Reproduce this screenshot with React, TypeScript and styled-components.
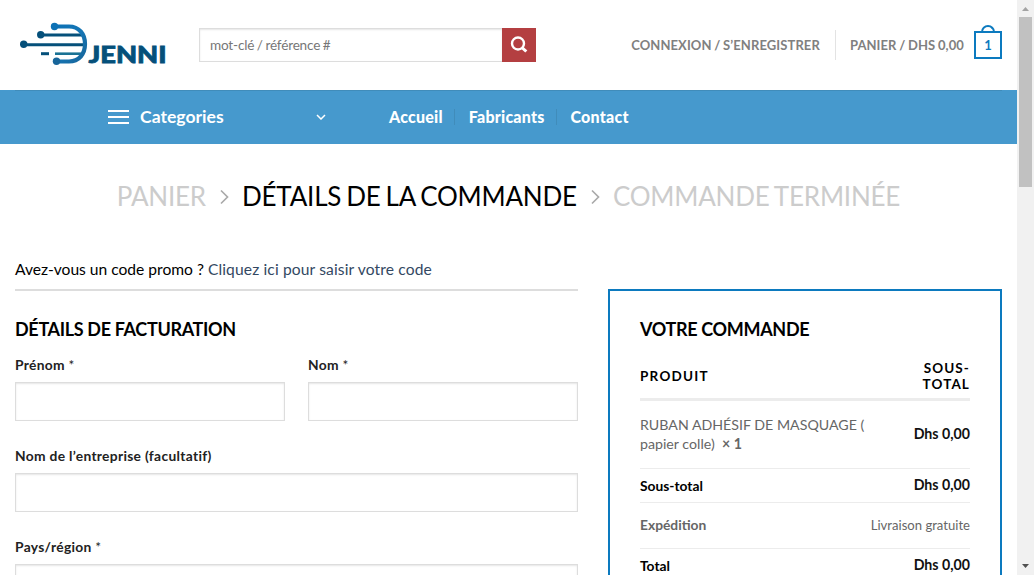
import React from 'react';
import styled, { createGlobalStyle } from 'styled-components';

const GlobalStyle = createGlobalStyle`
  *, *::before, *::after { box-sizing: border-box; }
  html, body { margin: 0; padding: 0; height: 100%; overflow: hidden; background: #fff; }
  body { font-family: Lato, "Liberation Sans", sans-serif; font-size: 16px; line-height: 1.6; color: #777; }
  h3, p { margin: 0; }
`;

const Window = styled.div`
  display: grid;
  grid-template-columns: 1fr 17px;
  height: 575px;
  overflow: hidden;
`;

const Page = styled.div`
  min-width: 0;
  height: 575px;
  overflow: hidden;
`;

const Header = styled.header`
  display: flex;
  align-items: center;
  height: 90px;
  padding: 0 15px;
`;

const Logo = styled.svg`
  display: block;
  width: 154px;
  height: 60px;
  flex: none;
`;

const LogoText = styled.text`
  font-family: Lato, sans-serif;
  font-weight: 900;
  font-size: 23.5px;
  fill: #05507a;
  stroke: #05507a;
  stroke-width: 0.8px;
`;

const SearchForm = styled.form`
  display: flex;
  width: 337px;
  height: 34px;
  margin-left: 30px;
`;

const SearchInput = styled.input`
  flex: 1;
  min-width: 0;
  padding: 0 10px;
  border: 1px solid #ddd;
  border-right: 0;
  border-radius: 0;
  outline: 0;
  background: #fff;
  box-shadow: inset 0 1px 2px rgba(0, 0, 0, 0.1);
  font: 400 13.6px Lato, sans-serif;
  letter-spacing: -0.2px;
  word-spacing: -0.6px;
  color: #333;
  &::placeholder { color: #777; opacity: 1; }
`;

const SearchButton = styled.button`
  display: flex;
  align-items: center;
  justify-content: center;
  width: 34px;
  padding: 0;
  border: 0;
  background: #b43f41;
`;

const Account = styled.div`
  display: flex;
  align-items: center;
  margin-left: auto;
  white-space: nowrap;
`;

const AccountLink = styled.a<{ $spacing: string }>`
  font-size: 13px;
  font-weight: 700;
  letter-spacing: ${(p) => p.$spacing};
  word-spacing: -0.6px;
  color: #808080;
`;

const Divider = styled.span`
  width: 1px;
  height: 30px;
  margin: 0 14px 0 15px;
  background: #e3e3e3;
`;

const Bag = styled.span`
  position: relative;
  width: 28px;
  height: 28px;
  margin-left: 10px;
  border: 2px solid #0c7abf;
  font-size: 13px;
  font-weight: 700;
  line-height: 24px;
  text-align: center;
  color: #0c7abf;
  &::after {
    content: '';
    position: absolute;
    left: 5px;
    bottom: 24px;
    width: 14px;
    height: 8px;
    border: 2px solid #0c7abf;
    border-bottom: 0;
    border-radius: 8px 8px 0 0;
  }
`;

const NavBar = styled.nav`
  height: 54px;
  padding: 0 15px;
  background: #4699cd;
`;

const NavInner = styled.div`
  display: flex;
  align-items: center;
  height: 54px;
  padding: 0 0 2px 93px;
  border-top: 1px solid #408cba;
  color: #fff;
`;

const Categories = styled.div`
  display: flex;
  align-items: center;
  width: 218px;
  margin-right: 63px;
`;

const CategoriesLabel = styled.span`
  margin: 0 auto 0 11px;
  font-size: 17.6px;
  font-weight: 700;
  line-height: 20px;
`;

const NavLink = styled.a`
  font-size: 16px;
  font-weight: 900;
  line-height: 16px;
  letter-spacing: 0.22px;
  & + & {
    margin-left: 11px;
    padding-left: 14px;
    border-left: 1px solid #408cba;
  }
`;

const Steps = styled.div`
  display: flex;
  align-items: center;
  justify-content: center;
  height: 104px;
  padding-top: 1px;
  font-size: 26px;
  white-space: nowrap;
`;

const Step = styled.span<{ $current?: boolean }>`
  color: ${(p) => (p.$current ? '#000' : '#ccc')};
  letter-spacing: -0.2px;
  word-spacing: -1.5px;
`;

const StepArrow = styled.svg`
  width: 9px;
  height: 16px;
  margin: 0 13px 0 14px;
  flex: none;
`;

const Promo = styled.p`
  padding: 8px 15px 0;
  height: 41px;
  font-size: 15.6px;
  line-height: 26px;
  color: #000;
`;

const PromoLink = styled.a`
  letter-spacing: 0.13px;
  color: #334862;
`;

const Checkout = styled.div`
  display: grid;
  grid-template-columns: 563px 394px;
  gap: 30px;
  padding: 0 15px;
`;

const Billing = styled.section`
  border-top: 2px solid #ddd;
  padding-top: 26px;
`;

const Title = styled.h3`
  font-size: 18px;
  font-weight: 700;
  line-height: 24px;
  letter-spacing: -0.33px;
  color: #000;
`;

const Fields = styled.div`
  padding-top: 14px;
`;

const FieldRow = styled.div`
  display: grid;
  grid-auto-flow: column;
  grid-auto-columns: 1fr;
  gap: 23px;
`;

const Field = styled.label`
  display: block;
  height: 91px;
`;

const FieldLabel = styled.span`
  display: block;
  margin-bottom: 7px;
  font-size: 13.8px;
  font-weight: 700;
  line-height: 20px;
  letter-spacing: 0.32px;
  color: #222;
`;

const Required = styled.span`
  font-weight: 400;
`;

const TextInput = styled.input`
  display: block;
  width: 100%;
  height: 39px;
  border: 1px solid #ddd;
  border-radius: 0;
  background: #fff;
  box-shadow: inset 0 1px 2px rgba(0, 0, 0, 0.1);
`;

const Order = styled.section`
  height: 400px;
  padding: 26px 30px 0;
  border: 2px solid #0c7abf;
`;

const OrderRow = styled.div<{ $height: number }>`
  display: flex;
  align-items: center;
  justify-content: space-between;
  height: ${(p) => p.$height}px;
  padding-bottom: 1px;
  border-bottom: 1px solid #ececec;
  font-size: 14.2px;
  line-height: 19px;
  color: #666;
`;

const OrderHead = styled(OrderRow)`
  padding: 15px 0 0;
  border-bottom-width: 3px;
`;

const ColumnHead = styled.span<{ $end?: boolean }>`
  padding-bottom: 2px;
  font-size: 13.5px;
  font-weight: 700;
  line-height: 16px;
  letter-spacing: ${(p) => (p.$end ? 1.1 : 1.25)}px;
  text-align: ${(p) => (p.$end ? 'right' : 'left')};
  color: #000;
`;

const RowName = styled.span<{ $muted?: boolean }>`
  padding-bottom: ${(p) => (p.$muted ? 1 : 0)}px;
  font-size: 13.8px;
  font-weight: 700;
  color: ${(p) => (p.$muted ? '#666' : '#000')};
`;

const Amount = styled.span`
  padding-bottom: 1px;
  font-weight: 700;
  color: #111;
`;

const Shipping = styled.span`
  font-size: 13.1px;
`;

const ScrollTrack = styled.div`
  display: flex;
  flex-direction: column;
  align-items: center;
  background: #f1f1f1;
`;

const ScrollThumb = styled.div`
  width: 13px;
  height: 170px;
  margin: 0 2px auto;
  background: #c1c1c1;
`;

const ScrollArrow = styled.svg`
  width: 17px;
  height: 17px;
  flex: none;
`;

function Brand() {
  return (
    <Logo viewBox="15 15 154 60">
      <defs>
        <linearGradient id="arc" x1="0" y1="0" x2="1" y2="1">
          <stop offset="0" stopColor="#0d71b5" />
          <stop offset=".5" stopColor="#1676b5" />
          <stop offset="1" stopColor="#17659a" />
        </linearGradient>
      </defs>
      <g fill="none" stroke="#05507a" strokeWidth="3">
        <path d="M40 35h42M24 44.800h60" />
        <path d="M41 53.700h8" />
        <path d="M55 53.700h26" stroke="#1a7294" strokeWidth="2.600" />
      </g>
      <path d="M55 26.500h14c10 0 16 7.500 16 17.500S79 61.500 69 61.500H57" fill="none" stroke="url(#arc)" strokeWidth="4.200" />
      <g fill="#05507a">
        <circle cx="40.700" cy="34.700" r="3.700" />
        <circle cx="23.700" cy="44.300" r="3.700" />
      </g>
      <circle cx="54.500" cy="26.500" r="3.700" fill="#0d71b5" />
      <circle cx="56.500" cy="61.300" r="3.700" fill="#17659a" />
      <LogoText x="88.500" y="62.700" textLength="78" lengthAdjust="spacingAndGlyphs">JENNI</LogoText>
    </Logo>
  );
}

function Arrow() {
  return (
    <StepArrow viewBox="0 0 9 16" fill="none" stroke="#aaa" strokeWidth="1.7">
      <path d="M1 1.500l6.500 6.500L1 14.500" />
    </StepArrow>
  );
}

export default function App() {
  return (
    <Window>
      <GlobalStyle />
      <Page>
        <Header>
          <Brand />
          <SearchForm>
            <SearchInput placeholder="mot-clé / référence #" />
            <SearchButton type="button" aria-label="Rechercher">
              <svg width="18" height="18" viewBox="0 0 18 18" fill="none" stroke="#fff">
                <circle cx="8" cy="7.500" r="6" strokeWidth="2.400" />
                <path d="M12.300 11.800l4 3.700" strokeWidth="3" />
              </svg>
            </SearchButton>
          </SearchForm>
          <Account>
            <AccountLink $spacing="0.1px">CONNEXION / S’ENREGISTRER</AccountLink>
            <Divider />
            <AccountLink $spacing="0.09px">PANIER / DHS 0,00</AccountLink>
            <Bag>1</Bag>
          </Account>
        </Header>

        <NavBar>
          <NavInner>
            <Categories>
              <svg width="21" height="14" viewBox="0 0 21 14" stroke="#fff" strokeWidth="1.800">
                <path d="M0 1h21M0 7h21M0 13h21" />
              </svg>
              <CategoriesLabel>Categories</CategoriesLabel>
              <svg width="10" height="6" viewBox="0 0 10 6" fill="none" stroke="#fff" strokeWidth="1.500">
                <path d="M1 1l4 4 4-4" />
              </svg>
            </Categories>
            <NavLink>Accueil</NavLink>
            <NavLink>Fabricants</NavLink>
            <NavLink>Contact</NavLink>
          </NavInner>
        </NavBar>

        <Steps>
          <Step>PANIER</Step>
          <Arrow />
          <Step $current>DÉTAILS DE LA COMMANDE</Step>
          <Arrow />
          <Step>COMMANDE TERMINÉE</Step>
        </Steps>

        <Promo>
          Avez-vous un code promo ? <PromoLink>Cliquez ici pour saisir votre code</PromoLink>
        </Promo>

        <Checkout>
          <Billing>
            <Title>DÉTAILS DE FACTURATION</Title>
            <Fields>
              <FieldRow>
                <Field>
                  <FieldLabel>Prénom <Required>*</Required></FieldLabel>
                  <TextInput />
                </Field>
                <Field>
                  <FieldLabel>Nom <Required>*</Required></FieldLabel>
                  <TextInput />
                </Field>
              </FieldRow>
              <Field>
                <FieldLabel>Nom de l’entreprise (facultatif)</FieldLabel>
                <TextInput />
              </Field>
              <Field>
                <FieldLabel>Pays/région <Required>*</Required></FieldLabel>
                <TextInput />
              </Field>
            </Fields>
          </Billing>

          <Order>
            <Title>VOTRE COMMANDE</Title>
            <OrderHead $height={60}>
              <ColumnHead>PRODUIT</ColumnHead>
              <ColumnHead $end>SOUS-<br />TOTAL</ColumnHead>
            </OrderHead>
            <OrderRow $height={68}>
              <span>
                RUBAN ADHÉSIF DE MASQUAGE (<br />papier colle)&nbsp; <b>× 1</b>
              </span>
              <Amount>Dhs 0,00</Amount>
            </OrderRow>
            <OrderRow $height={34}>
              <RowName>Sous-total</RowName>
              <Amount>Dhs 0,00</Amount>
            </OrderRow>
            <OrderRow $height={46}>
              <RowName $muted>Expédition</RowName>
              <Shipping>Livraison gratuite</Shipping>
            </OrderRow>
            <OrderRow $height={34}>
              <RowName>Total</RowName>
              <Amount>Dhs 0,00</Amount>
            </OrderRow>
          </Order>
        </Checkout>
      </Page>

      <ScrollTrack>
        <ScrollArrow viewBox="0 0 17 17" fill="#a3a3a3"><path d="M5 11l3.500-4 3.500 4z" /></ScrollArrow>
        <ScrollThumb />
        <ScrollArrow viewBox="0 0 17 17" fill="#505050"><path d="M5 6l3.500 4L12 6z" /></ScrollArrow>
      </ScrollTrack>
    </Window>
  );
}
